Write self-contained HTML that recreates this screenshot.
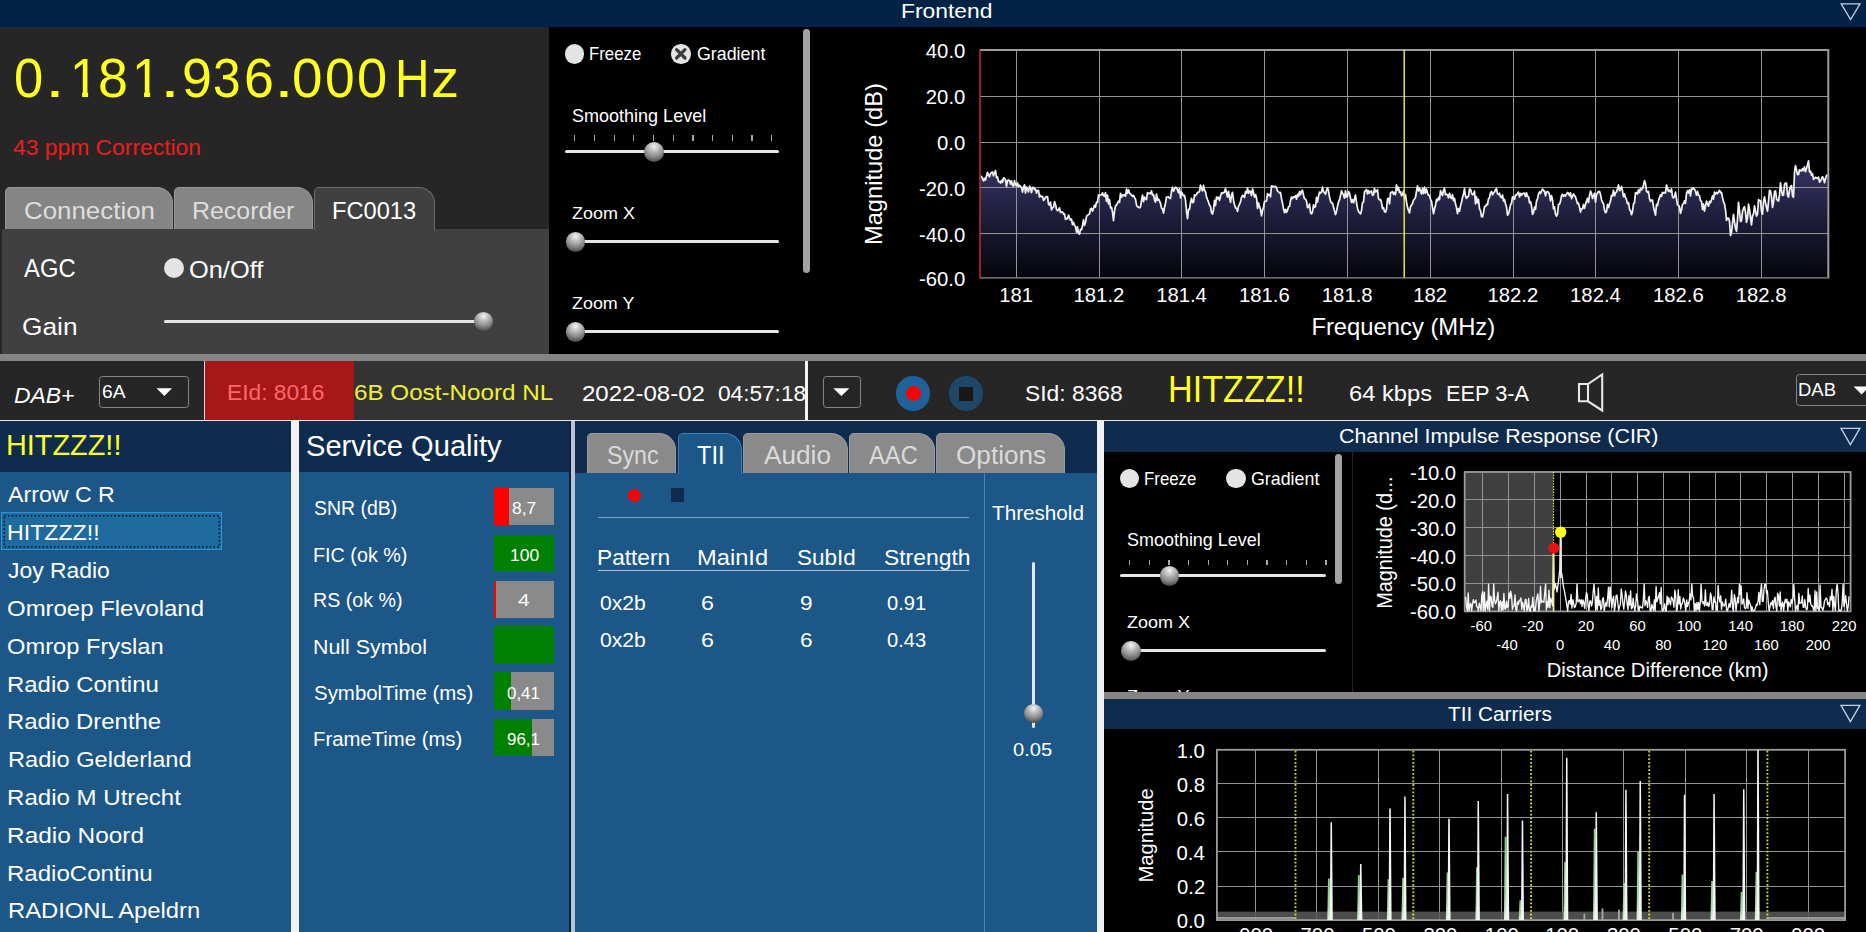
<!DOCTYPE html>
<html lang="en"><head><meta charset="utf-8"><title>DAB Frontend</title><style>
html,body{margin:0;padding:0;background:#000;}
body{width:1866px;height:932px;overflow:hidden;position:relative;font-family:"Liberation Sans",sans-serif;}
#r{position:absolute;left:0;top:0;width:1866px;height:932px;overflow:hidden;background:#000;}
#r div,#r span.t,#r svg{position:absolute;}
#r span.t{white-space:nowrap;line-height:1;transform-origin:0 0;display:block;}
.knob{border-radius:50%;background:radial-gradient(circle at 50% 22%,#f4f4f4 0%,#c8c8c8 22%,#8c8c8c 55%,#4a4a4a 85%,#333 100%);}
.radio{border-radius:50%;background:#e4e4e4;}
.fq{white-space:nowrap;line-height:1;height:60px;}
.fq span{display:inline-block;line-height:1;transform-origin:0 0;text-align:left;vertical-align:baseline;}
</style></head><body><div id="r">
<div style="left:0.0px;top:0.0px;width:1866.0px;height:27.0px;background:#032346;"></div>
<div style="left:0.0px;top:27.0px;width:549.0px;height:202.0px;background:#262626;"></div>
<div style="left:0.0px;top:229.0px;width:549.0px;height:125.5px;background:#404040;"></div>
<div style="left:0.0px;top:229.0px;width:2.0px;height:125.5px;background:#262626;"></div>
<div style="left:0.0px;top:354.0px;width:1866.0px;height:7.0px;background:#848484;"></div>
<div style="left:0.0px;top:361.0px;width:1866.0px;height:59.0px;background:#262626;"></div>
<div style="left:354.0px;top:361.0px;width:451.0px;height:59.0px;background:#333333;"></div>
<div style="left:205.0px;top:361.0px;width:149.3px;height:59.0px;background:#a81717;"></div>
<div style="left:204.0px;top:361.0px;width:1.0px;height:59.0px;background:#d8d8d8;"></div>
<div style="left:804.5px;top:361.0px;width:3.5px;height:59.0px;background:#f2f2f2;"></div>
<div style="left:0.0px;top:420.0px;width:1866.0px;height:1.0px;background:#e8e8e8;"></div>
<div style="left:0.0px;top:421.0px;width:291.5px;height:50.5px;background:#0f2c4e;"></div>
<div style="left:0.0px;top:471.5px;width:291.5px;height:460.5px;background:#1c5787;"></div>
<div style="left:291.1px;top:421.0px;width:8.0px;height:511.0px;background:#f2f0f0;"></div>
<div style="left:299.0px;top:421.0px;width:272.0px;height:50.5px;background:#0f2c4e;"></div>
<div style="left:299.0px;top:471.5px;width:272.0px;height:460.5px;background:#1c5787;"></div>
<div style="left:569.4px;top:421.0px;width:7.0px;height:511.0px;background:#08223e;"></div>
<div style="left:570.8px;top:421.0px;width:4.3px;height:511.0px;background:#b8c2d0;"></div>
<div style="left:575.2px;top:421.0px;width:521.8px;height:51.5px;background:#0f2c4e;"></div>
<div style="left:575.2px;top:472.5px;width:521.8px;height:459.5px;background:#1c5787;"></div>
<div style="left:1097.0px;top:421.0px;width:7.0px;height:511.0px;background:#f0f0f0;"></div>
<div style="left:1104.0px;top:421.0px;width:762.0px;height:31.0px;background:#0f2c4e;"></div>
<div style="left:1104.0px;top:691.5px;width:762.0px;height:7.5px;background:#858585;"></div>
<div style="left:1104.0px;top:699.0px;width:762.0px;height:30.0px;background:#0f2c4e;"></div>
<span class="t" style="left:900.57px;top:1.89px;font-size:19.86px;color:#fff;transform:scaleX(1.1507);">Frontend</span>
<svg style="left:1836px;top:0" width="30" height="27"><path d="M5.2,3.8 L24,3.8 L14.6,19.6 Z" fill="none" stroke="#c4d2e2" stroke-width="1.3"/></svg>
<div class="fq" style="left:14.30px;top:51.33px;font-size:55.6px;color:#ffff20;"><span style="width:31.06px;font-size:55.6px;transform:scaleX(0.9442);">0</span><span style="width:25.15px;font-size:55.6px;transform:scaleX(1.2874);">.</span><span style="width:27.77px;font-size:55.6px;transform:scaleX(0.9200);clip-path:polygon(0 0,60px 0,60px 73%,19.7px 73%,19.7px 100%,13.1px 100%,13.1px 73%,0 73%);">1</span><span style="width:34.23px;font-size:55.6px;transform:scaleX(0.9682);">8</span><span style="width:27.25px;font-size:55.6px;transform:scaleX(0.9200);clip-path:polygon(0 0,60px 0,60px 73%,19.7px 73%,19.7px 100%,13.1px 100%,13.1px 73%,0 73%);">1</span><span style="width:21.82px;font-size:55.6px;transform:scaleX(1.2874);">.</span><span style="width:31.44px;font-size:55.6px;transform:scaleX(0.9670);">9</span><span style="width:31.29px;font-size:55.6px;transform:scaleX(0.8898);">3</span><span style="width:29.65px;font-size:55.6px;transform:scaleX(0.9670);">6</span><span style="width:18.55px;font-size:55.6px;transform:scaleX(1.2874);">.</span><span style="width:32.36px;font-size:55.6px;transform:scaleX(0.9855);">0</span><span style="width:31.97px;font-size:55.6px;transform:scaleX(0.9592);">0</span><span style="width:38.35px;font-size:55.6px;transform:scaleX(0.9742);">0</span><span style="width:35.57px;font-size:54.2px;transform:scaleX(0.8797);">H</span><span style="width:40.00px;font-size:54.2px;transform:scaleX(1.0350);">z</span></div>
<span class="t" style="left:13.44px;top:137.90px;font-size:21.26px;color:#ee1c1c;transform:scaleX(1.0754);">43 ppm Correction</span>
<div style="left:5px;top:187px;width:165.5px;height:41px;background:#858585;border:1px solid #989898;border-bottom:none;border-radius:5px 16px 0 0;"></div>
<div style="left:173.5px;top:187px;width:137.0px;height:41px;background:#858585;border:1px solid #989898;border-bottom:none;border-radius:5px 16px 0 0;"></div>
<div style="left:314px;top:187px;width:119px;height:42px;background:#404040;border:1px solid #6c6c6c;border-bottom:none;border-radius:5px 16px 0 0;"></div>
<span class="t" style="left:23.71px;top:198.53px;font-size:24.48px;color:#dedede;transform:scaleX(1.0576);">Connection</span>
<span class="t" style="left:191.76px;top:198.53px;font-size:24.48px;color:#dedede;transform:scaleX(1.0176);">Recorder</span>
<span class="t" style="left:331.86px;top:198.53px;font-size:24.48px;color:#fff;transform:scaleX(0.9664);">FC0013</span>
<span class="t" style="left:23.75px;top:256.19px;font-size:25.17px;color:#fff;transform:scaleX(0.9464);">AGC</span>
<div class="radio" style="left:164.3px;top:257.5px;width:20px;height:20px"></div>
<span class="t" style="left:189.36px;top:259.42px;font-size:23.43px;color:#fff;transform:scaleX(1.0838);">On/Off</span>
<span class="t" style="left:22.43px;top:315.02px;font-size:24.20px;color:#fff;transform:scaleX(1.0876);">Gain</span>
<div style="left:164.3px;top:319.7px;width:328.0px;height:3.2px;background:#e6e6e6;border-radius:2px;"></div>
<div class="knob" style="left:474px;top:311.8px;width:19px;height:19px"></div>
<div class="radio" style="left:564.6px;top:44.2px;width:19.6px;height:19.6px"></div>
<div class="radio" style="left:671.2px;top:44.3px;width:19.6px;height:19.6px"></div>
<svg style="left:671.2px;top:44.3px" width="20" height="20"><path d="M5.6,5.6 L14,14 M14,5.6 L5.6,14" stroke="#3c3c3c" stroke-width="3.2" stroke-linecap="round"/></svg>
<span class="t" style="left:589.35px;top:46.46px;font-size:17.76px;color:#fff;transform:scaleX(0.9468);">Freeze</span>
<span class="t" style="left:696.91px;top:46.46px;font-size:17.76px;color:#fff;transform:scaleX(1.0039);">Gradient</span>
<span class="t" style="left:571.69px;top:108.46px;font-size:17.76px;color:#fff;transform:scaleX(1.0147);">Smoothing Level</span>
<div style="left:574.1px;top:135.0px;width:1.3px;height:5.8px;background:#a8a8a8;"></div>
<div style="left:593.8px;top:135.0px;width:1.3px;height:5.8px;background:#a8a8a8;"></div>
<div style="left:613.5px;top:135.0px;width:1.3px;height:5.8px;background:#a8a8a8;"></div>
<div style="left:633.2px;top:135.0px;width:1.3px;height:5.8px;background:#a8a8a8;"></div>
<div style="left:652.9px;top:135.0px;width:1.3px;height:5.8px;background:#a8a8a8;"></div>
<div style="left:672.6px;top:135.0px;width:1.3px;height:5.8px;background:#a8a8a8;"></div>
<div style="left:692.3px;top:135.0px;width:1.3px;height:5.8px;background:#a8a8a8;"></div>
<div style="left:712.0px;top:135.0px;width:1.3px;height:5.8px;background:#a8a8a8;"></div>
<div style="left:731.7px;top:135.0px;width:1.3px;height:5.8px;background:#a8a8a8;"></div>
<div style="left:751.4px;top:135.0px;width:1.3px;height:5.8px;background:#a8a8a8;"></div>
<div style="left:771.1px;top:135.0px;width:1.3px;height:5.8px;background:#a8a8a8;"></div>
<div style="left:565.2px;top:149.7px;width:213.4px;height:3.3px;background:#e6e6e6;border-radius:2px;"></div>
<div class="knob" style="left:643.6px;top:142.2px;width:20px;height:20px"></div>
<span class="t" style="left:571.96px;top:204.86px;font-size:17.06px;color:#fff;transform:scaleX(1.0532);">Zoom X</span>
<div style="left:575.0px;top:239.8px;width:203.6px;height:3.3px;background:#e6e6e6;border-radius:2px;"></div>
<div class="knob" style="left:565.7px;top:232.1px;width:19.8px;height:19.8px"></div>
<span class="t" style="left:571.96px;top:294.96px;font-size:17.06px;color:#fff;transform:scaleX(1.0508);">Zoom Y</span>
<div style="left:575.0px;top:329.7px;width:203.6px;height:3.3px;background:#e6e6e6;border-radius:2px;"></div>
<div class="knob" style="left:565.7px;top:322px;width:19.8px;height:19.8px"></div>
<div style="left:803.2px;top:28.5px;width:6.8px;height:244.5px;background:#a2a2a2;border-radius:3.4px;"></div>
<span class="t" style="left:14.31px;top:385.15px;font-size:21.68px;color:#fff;transform:scaleX(1.0569);font-style:italic;">DAB+</span>
<div style="left:99px;top:376.2px;width:87.6px;height:30.1px;border:1px solid #858585;border-radius:3.5px;background:#262626"></div>
<span class="t" style="left:101.54px;top:383.42px;font-size:18.88px;color:#fff;transform:scaleX(1.0185);">6A</span>
<svg style="left:150px;top:380px" width="30" height="24"><path d="M6.5,8.2 L22.1,8.2 L14.3,16.1 Z" fill="#fff"/></svg>
<span class="t" style="left:227.18px;top:382.31px;font-size:21.96px;color:#ff6868;transform:scaleX(1.0367);">EId: 8016</span>
<span class="t" style="left:353.79px;top:382.31px;font-size:21.96px;color:#f0f030;transform:scaleX(1.1026);">6B Oost-Noord NL</span>
<span class="t" style="left:581.50px;top:382.71px;font-size:21.96px;color:#fff;transform:scaleX(1.0952);">2022-08-02</span>
<span class="t" style="left:717.50px;top:382.71px;font-size:21.96px;color:#fff;transform:scaleX(1.0304);">04:57:18</span>
<div style="left:804.5px;top:361.0px;width:3.5px;height:59.0px;background:#f2f2f2;"></div>
<div style="left:823.3px;top:376.2px;width:35.5px;height:30.1px;border:1px solid #858585;border-radius:3.5px;background:#262626"></div>
<svg style="left:826px;top:380px" width="30" height="24"><path d="M7.3,8.2 L23.4,8.2 L15.35,16.1 Z" fill="#fff"/></svg>
<div style="left:896.2px;top:376.4px;width:34.2px;height:34.2px;border-radius:50%;background:#1f6299"></div>
<div style="left:906px;top:386.2px;width:14.6px;height:14.6px;border-radius:50%;background:#ff0000"></div>
<div style="left:948.8px;top:376.4px;width:34.2px;height:34.2px;border-radius:50%;background:#1f4768"></div>
<div style="left:958.8px;top:386.5px;width:14.0px;height:14.0px;background:#181818;"></div>
<span class="t" style="left:1025.37px;top:382.96px;font-size:22.38px;color:#fff;transform:scaleX(1.0205);">SId: 8368</span>
<span class="t" style="left:1167.66px;top:371.73px;font-size:36.23px;color:#ffff20;transform:scaleX(0.9438);">HITZZZ!!</span>
<span class="t" style="left:1348.51px;top:382.96px;font-size:22.38px;color:#fff;transform:scaleX(1.0597);">64 kbps</span>
<span class="t" style="left:1445.76px;top:382.96px;font-size:22.38px;color:#fff;transform:scaleX(0.9715);">EEP 3-A</span>
<svg style="left:1570px;top:368px" width="40" height="48"><path d="M9,16 H18 L32.2,6.5 V42.5 L18,33.3 H9 Z M18,16 V33.3" fill="none" stroke="#e6e6e6" stroke-width="2.1" stroke-linejoin="miter"/></svg>
<div style="left:1796.4px;top:374.4px;width:90px;height:30.1px;border:1px solid #858585;border-radius:3.5px;background:#262626"></div>
<span class="t" style="left:1798.12px;top:381.86px;font-size:17.76px;color:#fff;transform:scaleX(1.0412);">DAB</span>
<svg style="left:1846px;top:380px" width="20" height="24"><path d="M7.6,6.5 L23.6,6.5 L15.6,14.5 Z" fill="#fff"/></svg>
<span class="t" style="left:5.59px;top:431.24px;font-size:29.13px;color:#ffff20;transform:scaleX(0.9908);">HITZZZ!!</span>
<div style="left:1px;top:512.3px;width:219.1px;height:35.5px;background:#1f6a9f;border:1px solid #2f93d8"></div>
<svg style="left:0;top:510px" width="226" height="42"><rect x="4.2" y="5.8" width="215.2" height="31.2" fill="none" stroke="#08101c" stroke-width="1.5" stroke-dasharray="1.5 2.3"/></svg>
<span class="t" style="left:8.40px;top:484.80px;font-size:21.26px;color:#fff;transform:scaleX(1.0902);">Arrow C R</span>
<span class="t" style="left:7.15px;top:522.90px;font-size:21.26px;color:#fff;transform:scaleX(1.0896);">HITZZZ!!</span>
<span class="t" style="left:8.06px;top:560.80px;font-size:21.26px;color:#fff;transform:scaleX(1.0769);">Joy Radio</span>
<span class="t" style="left:7.32px;top:599.00px;font-size:21.26px;color:#fff;transform:scaleX(1.1269);">Omroep Flevoland</span>
<span class="t" style="left:7.33px;top:637.00px;font-size:21.26px;color:#fff;transform:scaleX(1.1145);">Omrop Fryslan</span>
<span class="t" style="left:7.48px;top:674.50px;font-size:21.26px;color:#fff;transform:scaleX(1.1270);">Radio Continu</span>
<span class="t" style="left:7.49px;top:712.10px;font-size:21.26px;color:#fff;transform:scaleX(1.1246);">Radio Drenthe</span>
<span class="t" style="left:7.51px;top:749.80px;font-size:21.26px;color:#fff;transform:scaleX(1.1102);">Radio Gelderland</span>
<span class="t" style="left:7.47px;top:787.90px;font-size:21.26px;color:#fff;transform:scaleX(1.1326);">Radio M Utrecht</span>
<span class="t" style="left:7.45px;top:825.90px;font-size:21.26px;color:#fff;transform:scaleX(1.1489);">Radio Noord</span>
<span class="t" style="left:7.48px;top:863.80px;font-size:21.26px;color:#fff;transform:scaleX(1.1317);">RadioContinu</span>
<span class="t" style="left:7.50px;top:901.30px;font-size:21.26px;color:#fff;transform:scaleX(1.1193);">RADIONL Apeldrn</span>
<span class="t" style="left:306.19px;top:430.80px;font-size:29.65px;color:#fff;transform:scaleX(0.9815);">Service Quality</span>
<span class="t" style="left:313.82px;top:499.31px;font-size:19.72px;color:#fff;transform:scaleX(0.9862);">SNR (dB)</span>
<span class="t" style="left:313.42px;top:545.61px;font-size:19.72px;color:#fff;transform:scaleX(1.0032);">FIC (ok %)</span>
<span class="t" style="left:313.33px;top:591.21px;font-size:19.72px;color:#fff;transform:scaleX(0.9970);">RS (ok %)</span>
<span class="t" style="left:313.19px;top:637.91px;font-size:19.72px;color:#fff;transform:scaleX(1.0836);">Null Symbol</span>
<span class="t" style="left:313.98px;top:683.71px;font-size:19.72px;color:#fff;transform:scaleX(1.0373);">SymbolTime (ms)</span>
<span class="t" style="left:313.27px;top:729.91px;font-size:19.72px;color:#fff;transform:scaleX(1.0304);">FrameTime (ms)</span>
<div style="left:494.0px;top:488.2px;width:59.9px;height:37.3px;background:#8a8a8a;"></div>
<div style="left:494.0px;top:488.2px;width:14.8px;height:37.3px;background:#ff0000;"></div>
<div style="left:494.0px;top:534.6px;width:59.9px;height:37.3px;background:#8a8a8a;"></div>
<div style="left:494.0px;top:534.6px;width:60.0px;height:37.3px;background:#008000;"></div>
<div style="left:494.0px;top:580.9px;width:59.9px;height:37.3px;background:#8a8a8a;"></div>
<div style="left:494.0px;top:580.9px;width:1.5px;height:37.3px;background:#ff0000;"></div>
<div style="left:494.0px;top:626.4px;width:59.9px;height:37.3px;background:#8a8a8a;"></div>
<div style="left:494.0px;top:626.4px;width:60.0px;height:37.3px;background:#008000;"></div>
<div style="left:494.0px;top:672.3px;width:59.9px;height:37.3px;background:#8a8a8a;"></div>
<div style="left:494.0px;top:672.3px;width:16.9px;height:37.3px;background:#008000;"></div>
<div style="left:494.0px;top:719.2px;width:59.9px;height:37.3px;background:#8a8a8a;"></div>
<div style="left:494.0px;top:719.2px;width:37.9px;height:37.3px;background:#008000;"></div>
<span class="t" style="left:511.82px;top:499.66px;font-size:17.06px;color:#fff;transform:scaleX(1.0183);">8,7</span>
<span class="t" style="left:509.59px;top:546.56px;font-size:17.06px;color:#fff;transform:scaleX(1.0251);">100</span>
<span class="t" style="left:518.18px;top:592.46px;font-size:17.06px;color:#fff;transform:scaleX(1.2302);">4</span>
<span class="t" style="left:507.12px;top:684.86px;font-size:17.06px;color:#fff;transform:scaleX(0.9894);">0,41</span>
<span class="t" style="left:507.04px;top:730.56px;font-size:17.06px;color:#fff;transform:scaleX(0.9920);">96,1</span>
<div style="left:587.2px;top:432.5px;width:87.0px;height:39.0px;background:#8a8a8a;border:1px solid #9a9a9a;border-bottom:none;border-radius:5px 17px 0 0;"></div>
<div style="left:677.7px;top:432.5px;width:62.299999999999955px;height:40.0px;background:#1c5787;border:1px solid #3f7fb4;border-bottom:none;border-radius:5px 17px 0 0;"></div>
<div style="left:743.4px;top:432.5px;width:102.60000000000002px;height:39.0px;background:#8a8a8a;border:1px solid #9a9a9a;border-bottom:none;border-radius:5px 17px 0 0;"></div>
<div style="left:849.3px;top:432.5px;width:83.60000000000002px;height:39.0px;background:#8a8a8a;border:1px solid #9a9a9a;border-bottom:none;border-radius:5px 17px 0 0;"></div>
<div style="left:936.4px;top:432.5px;width:126.60000000000002px;height:39.0px;background:#8a8a8a;border:1px solid #9a9a9a;border-bottom:none;border-radius:5px 17px 0 0;"></div>
<span class="t" style="left:606.75px;top:443.23px;font-size:24.90px;color:#dadada;transform:scaleX(0.9338);">Sync</span>
<span class="t" style="left:696.93px;top:443.23px;font-size:24.90px;color:#fff;transform:scaleX(0.9481);">TII</span>
<span class="t" style="left:763.50px;top:443.23px;font-size:24.90px;color:#dadada;transform:scaleX(1.0525);">Audio</span>
<span class="t" style="left:869.20px;top:443.23px;font-size:24.90px;color:#dadada;transform:scaleX(0.9525);">AAC</span>
<span class="t" style="left:955.52px;top:443.23px;font-size:24.90px;color:#dadada;transform:scaleX(1.0505);">Options</span>
<div style="left:627.9px;top:488.8px;width:13.2px;height:13.2px;border-radius:50%;background:#ff0000"></div>
<div style="left:671.1px;top:488.2px;width:13.1px;height:14.1px;background:#0f2c4e;"></div>
<div style="left:597.9px;top:517.0px;width:371.4px;height:1.0px;background:#7da6c6;"></div>
<div style="left:597.9px;top:570.3px;width:371.4px;height:1.2px;background:#a9c2d6;"></div>
<div style="left:984.2px;top:472.5px;width:1.0px;height:459.5px;background:#4a82b2;"></div>
<span class="t" style="left:596.58px;top:547.23px;font-size:21.82px;color:#fff;transform:scaleX(1.0402);">Pattern</span>
<span class="t" style="left:697.31px;top:547.23px;font-size:21.82px;color:#fff;transform:scaleX(1.0852);">MainId</span>
<span class="t" style="left:796.79px;top:547.23px;font-size:21.82px;color:#fff;transform:scaleX(1.0322);">SubId</span>
<span class="t" style="left:884.27px;top:547.23px;font-size:21.82px;color:#fff;transform:scaleX(1.0490);">Strength</span>
<span class="t" style="left:599.76px;top:593.63px;font-size:19.58px;color:#fff;transform:scaleX(1.0778);">0x2b</span>
<span class="t" style="left:700.84px;top:593.63px;font-size:19.58px;color:#fff;transform:scaleX(1.1862);">6</span>
<span class="t" style="left:799.88px;top:593.63px;font-size:19.58px;color:#fff;transform:scaleX(1.1532);">9</span>
<span class="t" style="left:886.69px;top:593.63px;font-size:19.58px;color:#fff;transform:scaleX(1.0297);">0.91</span>
<span class="t" style="left:599.76px;top:630.53px;font-size:19.58px;color:#fff;transform:scaleX(1.0778);">0x2b</span>
<span class="t" style="left:700.84px;top:630.53px;font-size:19.58px;color:#fff;transform:scaleX(1.1862);">6</span>
<span class="t" style="left:799.77px;top:630.53px;font-size:19.58px;color:#fff;transform:scaleX(1.1532);">6</span>
<span class="t" style="left:886.70px;top:630.53px;font-size:19.58px;color:#fff;transform:scaleX(1.0269);">0.43</span>
<span class="t" style="left:992.29px;top:501.54px;font-size:20.98px;color:#fff;transform:scaleX(0.9861);">Threshold</span>
<div style="left:1032.2px;top:561.5px;width:3.2px;height:166.3px;background:#e6e6e6;border-radius:2px;"></div>
<div class="knob" style="left:1024.1px;top:703.7px;width:19.4px;height:19.4px"></div>
<span class="t" style="left:1012.60px;top:742.15px;font-size:17.90px;color:#fff;transform:scaleX(1.1232);">0.05</span>
<span class="t" style="left:1338.93px;top:426.37px;font-size:20.00px;color:#fff;transform:scaleX(1.0681);">Channel Impulse Response (CIR)</span>
<svg style="left:1836px;top:421px" width="30" height="30"><path d="M5,7.4 L23.9,7.4 L14.4,23.6 Z" fill="none" stroke="#c4d2e2" stroke-width="1.3"/></svg>
<div class="radio" style="left:1119.9px;top:468.7px;width:19.6px;height:19.6px"></div>
<div class="radio" style="left:1226px;top:468.7px;width:19.6px;height:19.6px"></div>
<span class="t" style="left:1144.35px;top:471.46px;font-size:17.76px;color:#fff;transform:scaleX(0.9487);">Freeze</span>
<span class="t" style="left:1251.41px;top:471.46px;font-size:17.76px;color:#fff;transform:scaleX(1.0039);">Gradient</span>
<span class="t" style="left:1127.09px;top:532.46px;font-size:17.76px;color:#fff;transform:scaleX(1.0116);">Smoothing Level</span>
<div style="left:1129.1px;top:559.6px;width:1.3px;height:5.4px;background:#a8a8a8;"></div>
<div style="left:1148.7px;top:559.6px;width:1.3px;height:5.4px;background:#a8a8a8;"></div>
<div style="left:1168.3px;top:559.6px;width:1.3px;height:5.4px;background:#a8a8a8;"></div>
<div style="left:1188.0px;top:559.6px;width:1.3px;height:5.4px;background:#a8a8a8;"></div>
<div style="left:1207.6px;top:559.6px;width:1.3px;height:5.4px;background:#a8a8a8;"></div>
<div style="left:1227.2px;top:559.6px;width:1.3px;height:5.4px;background:#a8a8a8;"></div>
<div style="left:1246.8px;top:559.6px;width:1.3px;height:5.4px;background:#a8a8a8;"></div>
<div style="left:1266.4px;top:559.6px;width:1.3px;height:5.4px;background:#a8a8a8;"></div>
<div style="left:1286.1px;top:559.6px;width:1.3px;height:5.4px;background:#a8a8a8;"></div>
<div style="left:1305.7px;top:559.6px;width:1.3px;height:5.4px;background:#a8a8a8;"></div>
<div style="left:1325.3px;top:559.6px;width:1.3px;height:5.4px;background:#a8a8a8;"></div>
<div style="left:1120.3px;top:573.9px;width:205.6px;height:3.3px;background:#e6e6e6;border-radius:2px;"></div>
<div class="knob" style="left:1159.6px;top:566.2px;width:19.8px;height:19.8px"></div>
<span class="t" style="left:1126.76px;top:613.96px;font-size:17.06px;color:#fff;transform:scaleX(1.0549);">Zoom X</span>
<div style="left:1130.0px;top:648.9px;width:195.9px;height:3.3px;background:#e6e6e6;border-radius:2px;"></div>
<div class="knob" style="left:1120.8px;top:641.1px;width:19.8px;height:19.8px"></div>
<div style="left:1335.3px;top:453.5px;width:7.2px;height:130.0px;background:#a2a2a2;border-radius:3.6px;"></div>
<div style="left:1110px;top:680px;width:240px;height:11.5px;overflow:hidden">
<span class="t" style="left:16.76px;top:7.66px;font-size:17.06px;color:#fff;transform:scaleX(1.0542);">Zoom Y</span>
</div>
<div style="left:1352.2px;top:452.0px;width:1.0px;height:239.5px;background:#242424;"></div>
<span class="t" style="left:1447.88px;top:703.50px;font-size:20.56px;color:#fff;transform:scaleX(1.0102);">TII Carriers</span>
<svg style="left:1836px;top:699px" width="30" height="30"><path d="M5,6.4 L23.9,6.4 L14.4,22.6 Z" fill="none" stroke="#c4d2e2" stroke-width="1.3"/></svg>
<span class="t" style="left:925.83px;top:41.02px;font-size:20.30px;color:#fff;">40.0</span>
<span class="t" style="left:925.83px;top:87.22px;font-size:20.30px;color:#fff;">20.0</span>
<span class="t" style="left:937.09px;top:133.22px;font-size:20.30px;color:#fff;">0.0</span>
<span class="t" style="left:919.03px;top:178.72px;font-size:20.30px;color:#fff;">-20.0</span>
<span class="t" style="left:919.03px;top:224.52px;font-size:20.30px;color:#fff;">-40.0</span>
<span class="t" style="left:919.03px;top:268.82px;font-size:20.30px;color:#fff;">-60.0</span>
<span class="t" style="left:999.20px;top:285.02px;font-size:20.30px;color:#fff;">181</span>
<span class="t" style="left:1073.56px;top:285.02px;font-size:20.30px;color:#fff;">181.2</span>
<span class="t" style="left:1156.15px;top:285.02px;font-size:20.30px;color:#fff;">181.4</span>
<span class="t" style="left:1239.04px;top:285.02px;font-size:20.30px;color:#fff;">181.6</span>
<span class="t" style="left:1321.83px;top:285.02px;font-size:20.30px;color:#fff;">181.8</span>
<span class="t" style="left:1413.20px;top:285.02px;font-size:20.30px;color:#fff;">182</span>
<span class="t" style="left:1487.51px;top:285.02px;font-size:20.30px;color:#fff;">182.2</span>
<span class="t" style="left:1570.10px;top:285.02px;font-size:20.30px;color:#fff;">182.4</span>
<span class="t" style="left:1652.99px;top:285.02px;font-size:20.30px;color:#fff;">182.6</span>
<span class="t" style="left:1735.78px;top:285.02px;font-size:20.30px;color:#fff;">182.8</span>
<span class="t" style="left:1311.39px;top:314.55px;font-size:23.80px;color:#fff;">Frequency (MHz)</span>
<span class="t" style="left:794.37px;top:152.15px;width:162.46px;height:23.70px;font-size:23.70px;color:#fff;transform-origin:50% 50%;transform:rotate(-90deg) scaleX(1.0000);">Magnitude (dB)</span>
<span class="t" style="left:1409.93px;top:462.92px;font-size:20.30px;color:#fff;">-10.0</span>
<span class="t" style="left:1409.93px;top:490.80px;font-size:20.30px;color:#fff;">-20.0</span>
<span class="t" style="left:1409.93px;top:518.68px;font-size:20.30px;color:#fff;">-30.0</span>
<span class="t" style="left:1409.93px;top:546.56px;font-size:20.30px;color:#fff;">-40.0</span>
<span class="t" style="left:1409.93px;top:574.44px;font-size:20.30px;color:#fff;">-50.0</span>
<span class="t" style="left:1409.93px;top:602.32px;font-size:20.30px;color:#fff;">-60.0</span>
<span class="t" style="left:1470.50px;top:618.67px;font-size:14.80px;color:#fff;">-60</span>
<span class="t" style="left:1522.12px;top:618.67px;font-size:14.80px;color:#fff;">-20</span>
<span class="t" style="left:1577.68px;top:618.67px;font-size:14.80px;color:#fff;">20</span>
<span class="t" style="left:1629.31px;top:618.67px;font-size:14.80px;color:#fff;">60</span>
<span class="t" style="left:1676.63px;top:618.67px;font-size:14.80px;color:#fff;">100</span>
<span class="t" style="left:1728.25px;top:618.67px;font-size:14.80px;color:#fff;">140</span>
<span class="t" style="left:1779.87px;top:618.67px;font-size:14.80px;color:#fff;">180</span>
<span class="t" style="left:1831.68px;top:618.67px;font-size:14.80px;color:#fff;">220</span>
<span class="t" style="left:1496.31px;top:638.27px;font-size:14.80px;color:#fff;">-40</span>
<span class="t" style="left:1556.06px;top:638.27px;font-size:14.80px;color:#fff;">0</span>
<span class="t" style="left:1603.72px;top:638.27px;font-size:14.80px;color:#fff;">40</span>
<span class="t" style="left:1655.15px;top:638.27px;font-size:14.80px;color:#fff;">80</span>
<span class="t" style="left:1702.44px;top:638.27px;font-size:14.80px;color:#fff;">120</span>
<span class="t" style="left:1754.06px;top:638.27px;font-size:14.80px;color:#fff;">160</span>
<span class="t" style="left:1805.87px;top:638.27px;font-size:14.80px;color:#fff;">200</span>
<span class="t" style="left:1546.70px;top:659.90px;font-size:20.20px;color:#fff;">Distance Difference (km)</span>
<span class="t" style="left:1314.40px;top:531.75px;width:143.19px;height:21.50px;font-size:21.50px;color:#fff;transform-origin:50% 50%;transform:rotate(-90deg) scaleX(0.9231);">Magnitude (d...</span>
<span class="t" style="left:1176.69px;top:740.72px;font-size:20.30px;color:#fff;">1.0</span>
<span class="t" style="left:1176.80px;top:774.78px;font-size:20.30px;color:#fff;">0.8</span>
<span class="t" style="left:1176.80px;top:808.84px;font-size:20.30px;color:#fff;">0.6</span>
<span class="t" style="left:1176.59px;top:842.90px;font-size:20.30px;color:#fff;">0.4</span>
<span class="t" style="left:1177.00px;top:876.96px;font-size:20.30px;color:#fff;">0.2</span>
<span class="t" style="left:1176.69px;top:911.02px;font-size:20.30px;color:#fff;">0.0</span>
<span class="t" style="left:1232.40px;top:924.72px;font-size:20.30px;color:#fff;">-900</span>
<span class="t" style="left:1293.83px;top:924.72px;font-size:20.30px;color:#fff;">-700</span>
<span class="t" style="left:1355.26px;top:924.72px;font-size:20.30px;color:#fff;">-500</span>
<span class="t" style="left:1416.69px;top:924.72px;font-size:20.30px;color:#fff;">-300</span>
<span class="t" style="left:1478.12px;top:924.72px;font-size:20.30px;color:#fff;">-100</span>
<span class="t" style="left:1545.14px;top:924.72px;font-size:20.30px;color:#fff;">100</span>
<span class="t" style="left:1606.93px;top:924.72px;font-size:20.30px;color:#fff;">300</span>
<span class="t" style="left:1668.36px;top:924.72px;font-size:20.30px;color:#fff;">500</span>
<span class="t" style="left:1729.69px;top:924.72px;font-size:20.30px;color:#fff;">700</span>
<span class="t" style="left:1791.17px;top:924.72px;font-size:20.30px;color:#fff;">900</span>
<span class="t" style="left:1099.48px;top:825.30px;width:95.04px;height:20.20px;font-size:20.20px;color:#fff;transform-origin:50% 50%;transform:rotate(-90deg) scaleX(1.0000);">Magnitude</span>
<svg style="left:0;top:0" width="1866" height="932" viewBox="0 0 1866 932"><defs><linearGradient id="sg" gradientUnits="userSpaceOnUse" x1="0" y1="165" x2="0" y2="278"><stop offset="0" stop-color="#343464"/><stop offset="0.6" stop-color="#17172e"/><stop offset="1" stop-color="#05050c"/></linearGradient></defs><polygon points="980.0,277.8 980.5,176.1 981.5,176.6 982.5,178.5 983.5,180.8 984.5,178.4 985.5,180.0 986.5,175.9 987.5,172.3 988.5,175.2 989.5,176.8 990.5,173.5 991.5,172.7 992.5,171.9 993.5,175.8 994.5,173.0 995.5,170.6 996.5,177.6 997.5,176.9 998.5,181.7 999.5,181.4 1000.5,183.1 1001.5,180.3 1002.5,182.3 1003.5,177.9 1004.5,178.3 1005.5,180.2 1006.5,186.4 1007.5,180.6 1008.5,180.1 1009.5,180.5 1010.5,184.0 1011.5,180.9 1012.5,185.6 1013.5,186.0 1014.5,180.6 1015.5,185.2 1016.5,185.8 1017.5,182.9 1018.5,186.4 1019.5,185.3 1020.5,186.4 1021.5,187.3 1022.5,192.1 1023.5,187.2 1024.5,184.8 1025.5,193.1 1026.5,187.0 1027.5,189.4 1028.5,191.8 1029.5,186.1 1030.5,188.1 1031.5,192.7 1032.5,187.6 1033.5,187.3 1034.5,189.6 1035.5,188.9 1036.5,193.1 1037.5,190.6 1038.5,190.4 1039.5,197.0 1040.5,195.5 1041.5,196.7 1042.5,196.3 1043.5,200.3 1044.5,199.3 1045.5,197.3 1046.5,196.7 1047.5,196.6 1048.5,204.1 1049.5,205.2 1050.5,202.2 1051.5,209.8 1052.5,207.7 1053.5,207.2 1054.5,201.6 1055.5,204.5 1056.5,209.2 1057.5,210.7 1058.5,210.0 1059.5,207.9 1060.5,212.5 1061.5,212.1 1062.5,211.9 1063.5,214.0 1064.5,213.9 1065.5,219.4 1066.5,218.4 1067.5,218.8 1068.5,215.1 1069.5,217.8 1070.5,220.1 1071.5,219.1 1072.5,224.6 1073.5,222.4 1074.5,225.2 1075.5,226.5 1076.5,232.1 1077.5,226.9 1078.5,233.3 1079.5,234.1 1080.5,229.4 1081.5,229.8 1082.5,225.8 1083.5,219.6 1084.5,225.3 1085.5,222.5 1086.5,216.4 1087.5,215.2 1088.5,214.6 1089.5,214.0 1090.5,208.9 1091.5,208.4 1092.5,211.2 1093.5,208.3 1094.5,205.2 1095.5,207.2 1096.5,202.1 1097.5,202.4 1098.5,195.0 1099.5,195.5 1100.5,195.0 1101.5,194.9 1102.5,192.8 1103.5,195.8 1104.5,196.3 1105.5,192.6 1106.5,201.3 1107.5,195.2 1108.5,203.9 1109.5,199.7 1110.5,208.0 1111.5,207.2 1112.5,212.0 1113.5,220.7 1114.5,211.3 1115.5,205.9 1116.5,205.0 1117.5,203.1 1118.5,201.1 1119.5,202.3 1120.5,193.3 1121.5,197.4 1122.5,195.0 1123.5,195.6 1124.5,194.6 1125.5,196.3 1126.5,189.0 1127.5,193.3 1128.5,189.8 1129.5,193.0 1130.5,194.1 1131.5,195.0 1132.5,196.4 1133.5,195.3 1134.5,197.7 1135.5,199.2 1136.5,204.9 1137.5,206.8 1138.5,206.9 1139.5,207.8 1140.5,206.8 1141.5,200.7 1142.5,195.1 1143.5,201.6 1144.5,197.2 1145.5,198.8 1146.5,199.6 1147.5,192.6 1148.5,193.5 1149.5,193.1 1150.5,193.7 1151.5,190.9 1152.5,195.1 1153.5,194.5 1154.5,199.9 1155.5,202.0 1156.5,194.2 1157.5,200.3 1158.5,199.0 1159.5,200.9 1160.5,203.3 1161.5,208.1 1162.5,209.0 1163.5,213.1 1164.5,207.4 1165.5,203.2 1166.5,197.0 1167.5,197.0 1168.5,196.9 1169.5,198.2 1170.5,198.5 1171.5,191.0 1172.5,187.1 1173.5,191.4 1174.5,188.8 1175.5,187.2 1176.5,187.7 1177.5,189.9 1178.5,192.8 1179.5,188.4 1180.5,197.9 1181.5,192.0 1182.5,193.9 1183.5,195.9 1184.5,195.4 1185.5,200.1 1186.5,211.2 1187.5,218.7 1188.5,209.4 1189.5,209.4 1190.5,202.5 1191.5,198.3 1192.5,202.5 1193.5,202.3 1194.5,194.9 1195.5,195.8 1196.5,194.5 1197.5,192.4 1198.5,192.4 1199.5,191.4 1200.5,185.1 1201.5,188.8 1202.5,190.8 1203.5,185.4 1204.5,190.2 1205.5,192.0 1206.5,196.7 1207.5,199.5 1208.5,202.1 1209.5,205.2 1210.5,206.4 1211.5,212.7 1212.5,214.0 1213.5,209.7 1214.5,200.3 1215.5,205.5 1216.5,197.0 1217.5,198.9 1218.5,197.2 1219.5,200.3 1220.5,196.1 1221.5,192.9 1222.5,193.4 1223.5,192.6 1224.5,192.1 1225.5,188.6 1226.5,192.6 1227.5,197.0 1228.5,191.4 1229.5,197.2 1230.5,202.3 1231.5,195.0 1232.5,192.4 1233.5,200.2 1234.5,204.8 1235.5,208.0 1236.5,208.2 1237.5,211.3 1238.5,206.4 1239.5,204.4 1240.5,201.7 1241.5,197.5 1242.5,195.4 1243.5,195.9 1244.5,197.5 1245.5,191.7 1246.5,193.1 1247.5,188.0 1248.5,193.3 1249.5,191.0 1250.5,191.8 1251.5,195.5 1252.5,189.0 1253.5,192.3 1254.5,197.2 1255.5,194.6 1256.5,197.7 1257.5,208.4 1258.5,202.8 1259.5,206.6 1260.5,209.5 1261.5,215.9 1262.5,210.5 1263.5,207.4 1264.5,201.3 1265.5,201.5 1266.5,200.9 1267.5,193.7 1268.5,195.5 1269.5,194.4 1270.5,196.8 1271.5,186.0 1272.5,186.2 1273.5,186.5 1274.5,186.5 1275.5,186.4 1276.5,187.7 1277.5,190.9 1278.5,191.8 1279.5,193.0 1280.5,192.4 1281.5,198.7 1282.5,203.1 1283.5,208.7 1284.5,212.6 1285.5,209.4 1286.5,212.4 1287.5,210.2 1288.5,206.7 1289.5,206.3 1290.5,200.8 1291.5,197.1 1292.5,198.5 1293.5,196.7 1294.5,197.2 1295.5,195.7 1296.5,199.2 1297.5,194.3 1298.5,196.3 1299.5,191.6 1300.5,194.7 1301.5,191.2 1302.5,190.3 1303.5,195.2 1304.5,198.8 1305.5,199.0 1306.5,201.2 1307.5,207.6 1308.5,207.3 1309.5,204.0 1310.5,212.7 1311.5,213.8 1312.5,211.8 1313.5,204.9 1314.5,207.3 1315.5,206.5 1316.5,197.4 1317.5,202.0 1318.5,196.1 1319.5,192.2 1320.5,193.2 1321.5,191.9 1322.5,187.2 1323.5,191.6 1324.5,192.6 1325.5,194.3 1326.5,190.4 1327.5,187.9 1328.5,190.8 1329.5,197.1 1330.5,201.1 1331.5,203.0 1332.5,203.2 1333.5,207.1 1334.5,210.9 1335.5,214.6 1336.5,211.4 1337.5,206.2 1338.5,202.0 1339.5,199.9 1340.5,195.8 1341.5,190.7 1342.5,193.3 1343.5,194.5 1344.5,198.2 1345.5,190.8 1346.5,197.0 1347.5,196.4 1348.5,191.5 1349.5,193.2 1350.5,198.0 1351.5,202.4 1352.5,199.7 1353.5,202.7 1354.5,198.7 1355.5,195.0 1356.5,203.0 1357.5,208.2 1358.5,211.6 1359.5,212.5 1360.5,213.9 1361.5,210.5 1362.5,202.7 1363.5,202.0 1364.5,192.0 1365.5,190.6 1366.5,189.5 1367.5,193.9 1368.5,190.7 1369.5,193.1 1370.5,191.6 1371.5,190.9 1372.5,195.4 1373.5,194.8 1374.5,188.5 1375.5,191.9 1376.5,191.2 1377.5,189.6 1378.5,198.7 1379.5,199.8 1380.5,199.6 1381.5,202.8 1382.5,208.6 1383.5,207.6 1384.5,211.5 1385.5,212.2 1386.5,209.3 1387.5,199.0 1388.5,198.3 1389.5,203.8 1390.5,193.0 1391.5,192.2 1392.5,191.5 1393.5,194.3 1394.5,192.4 1395.5,194.6 1396.5,184.8 1397.5,190.1 1398.5,187.4 1399.5,192.5 1400.5,191.6 1401.5,195.7 1402.5,194.6 1403.5,191.0 1404.5,198.5 1405.5,194.5 1406.5,201.9 1407.5,207.3 1408.5,210.5 1409.5,212.9 1410.5,206.6 1411.5,205.0 1412.5,203.5 1413.5,200.3 1414.5,199.0 1415.5,197.4 1416.5,191.2 1417.5,186.0 1418.5,191.0 1419.5,188.2 1420.5,190.9 1421.5,193.9 1422.5,188.6 1423.5,193.7 1424.5,187.2 1425.5,193.1 1426.5,189.2 1427.5,192.7 1428.5,195.4 1429.5,195.3 1430.5,199.4 1431.5,201.1 1432.5,207.3 1433.5,213.7 1434.5,208.9 1435.5,205.2 1436.5,199.3 1437.5,201.1 1438.5,197.5 1439.5,199.5 1440.5,190.6 1441.5,193.7 1442.5,195.5 1443.5,190.2 1444.5,188.3 1445.5,194.8 1446.5,194.2 1447.5,194.9 1448.5,197.9 1449.5,193.3 1450.5,197.3 1451.5,198.5 1452.5,194.7 1453.5,200.6 1454.5,198.3 1455.5,204.1 1456.5,207.5 1457.5,213.6 1458.5,208.6 1459.5,211.3 1460.5,205.7 1461.5,202.2 1462.5,197.6 1463.5,194.0 1464.5,188.7 1465.5,196.2 1466.5,198.3 1467.5,196.5 1468.5,196.5 1469.5,189.1 1470.5,189.3 1471.5,192.8 1472.5,194.8 1473.5,194.3 1474.5,191.2 1475.5,203.9 1476.5,196.9 1477.5,202.9 1478.5,199.4 1479.5,208.9 1480.5,210.4 1481.5,216.5 1482.5,216.9 1483.5,212.9 1484.5,206.7 1485.5,206.5 1486.5,204.4 1487.5,204.7 1488.5,198.8 1489.5,197.7 1490.5,192.7 1491.5,191.5 1492.5,194.8 1493.5,193.0 1494.5,191.9 1495.5,189.6 1496.5,188.8 1497.5,193.9 1498.5,194.6 1499.5,193.2 1500.5,197.1 1501.5,197.7 1502.5,195.0 1503.5,201.1 1504.5,199.5 1505.5,203.7 1506.5,207.0 1507.5,215.1 1508.5,214.0 1509.5,209.8 1510.5,204.7 1511.5,203.4 1512.5,196.9 1513.5,197.1 1514.5,199.3 1515.5,195.0 1516.5,195.1 1517.5,193.4 1518.5,192.1 1519.5,196.9 1520.5,193.3 1521.5,195.2 1522.5,193.8 1523.5,193.1 1524.5,193.4 1525.5,196.6 1526.5,192.8 1527.5,196.4 1528.5,196.5 1529.5,202.8 1530.5,201.7 1531.5,206.1 1532.5,214.4 1533.5,212.7 1534.5,207.2 1535.5,209.3 1536.5,201.2 1537.5,198.8 1538.5,193.9 1539.5,191.9 1540.5,193.5 1541.5,191.1 1542.5,189.1 1543.5,190.6 1544.5,191.1 1545.5,195.9 1546.5,192.0 1547.5,191.4 1548.5,192.1 1549.5,194.7 1550.5,200.8 1551.5,195.6 1552.5,199.5 1553.5,208.8 1554.5,206.8 1555.5,213.8 1556.5,216.1 1557.5,214.0 1558.5,204.4 1559.5,204.2 1560.5,201.2 1561.5,195.8 1562.5,194.2 1563.5,196.4 1564.5,194.9 1565.5,196.0 1566.5,194.1 1567.5,192.5 1568.5,193.3 1569.5,195.6 1570.5,192.9 1571.5,198.6 1572.5,196.3 1573.5,194.0 1574.5,195.4 1575.5,196.9 1576.5,200.2 1577.5,203.7 1578.5,203.1 1579.5,207.3 1580.5,212.1 1581.5,208.8 1582.5,208.8 1583.5,204.5 1584.5,208.3 1585.5,204.4 1586.5,201.4 1587.5,198.3 1588.5,202.5 1589.5,195.5 1590.5,191.1 1591.5,193.1 1592.5,198.5 1593.5,196.3 1594.5,193.3 1595.5,202.2 1596.5,194.9 1597.5,192.9 1598.5,191.6 1599.5,191.3 1600.5,194.4 1601.5,199.7 1602.5,202.4 1603.5,203.7 1604.5,210.1 1605.5,212.7 1606.5,211.9 1607.5,204.4 1608.5,207.5 1609.5,203.7 1610.5,201.1 1611.5,195.4 1612.5,195.9 1613.5,190.4 1614.5,195.9 1615.5,192.8 1616.5,192.1 1617.5,188.4 1618.5,184.9 1619.5,190.7 1620.5,189.2 1621.5,186.5 1622.5,190.9 1623.5,196.7 1624.5,193.9 1625.5,197.7 1626.5,199.7 1627.5,203.8 1628.5,202.6 1629.5,209.2 1630.5,210.8 1631.5,214.7 1632.5,211.5 1633.5,203.9 1634.5,202.4 1635.5,192.9 1636.5,192.5 1637.5,194.1 1638.5,189.9 1639.5,192.5 1640.5,188.3 1641.5,189.9 1642.5,188.7 1643.5,184.9 1644.5,180.7 1645.5,183.5 1646.5,191.1 1647.5,192.4 1648.5,191.5 1649.5,198.6 1650.5,201.5 1651.5,200.1 1652.5,200.1 1653.5,206.9 1654.5,211.3 1655.5,215.1 1656.5,204.4 1657.5,205.5 1658.5,200.6 1659.5,197.6 1660.5,194.9 1661.5,196.4 1662.5,192.3 1663.5,193.0 1664.5,192.7 1665.5,192.9 1666.5,185.0 1667.5,188.4 1668.5,191.4 1669.5,190.2 1670.5,191.9 1671.5,189.0 1672.5,196.9 1673.5,198.0 1674.5,196.7 1675.5,192.1 1676.5,198.6 1677.5,205.0 1678.5,205.1 1679.5,207.0 1680.5,213.3 1681.5,210.1 1682.5,204.2 1683.5,203.8 1684.5,200.9 1685.5,203.3 1686.5,193.3 1687.5,190.7 1688.5,193.0 1689.5,189.8 1690.5,195.8 1691.5,188.6 1692.5,189.4 1693.5,188.0 1694.5,189.0 1695.5,191.5 1696.5,195.2 1697.5,191.4 1698.5,195.2 1699.5,195.8 1700.5,200.8 1701.5,201.3 1702.5,209.5 1703.5,204.0 1704.5,211.2 1705.5,205.9 1706.5,201.1 1707.5,204.2 1708.5,206.2 1709.5,201.4 1710.5,202.7 1711.5,199.8 1712.5,195.9 1713.5,199.1 1714.5,192.2 1715.5,194.1 1716.5,192.5 1717.5,193.7 1718.5,191.8 1719.5,190.3 1720.5,192.8 1721.5,192.3 1722.5,197.6 1723.5,201.7 1724.5,203.8 1725.5,209.8 1726.5,220.4 1727.5,218.1 1728.5,218.1 1729.5,221.1 1730.5,235.5 1731.5,233.0 1732.5,222.4 1733.5,214.3 1734.5,221.8 1735.5,228.3 1736.5,231.3 1737.5,219.3 1738.5,202.4 1739.5,210.5 1740.5,221.5 1741.5,220.6 1742.5,211.5 1743.5,208.3 1744.5,206.6 1745.5,212.2 1746.5,222.3 1747.5,217.9 1748.5,204.2 1749.5,209.4 1750.5,217.4 1751.5,225.0 1752.5,215.8 1753.5,214.2 1754.5,205.9 1755.5,211.1 1756.5,216.1 1757.5,214.2 1758.5,199.6 1759.5,200.7 1760.5,200.6 1761.5,211.5 1762.5,214.2 1763.5,201.7 1764.5,196.9 1765.5,202.7 1766.5,207.4 1767.5,211.2 1768.5,201.8 1769.5,190.3 1770.5,191.1 1771.5,196.5 1772.5,207.3 1773.5,202.3 1774.5,191.5 1775.5,190.9 1776.5,198.7 1777.5,200.4 1778.5,201.1 1779.5,194.9 1780.5,182.9 1781.5,190.1 1782.5,195.3 1783.5,195.2 1784.5,184.5 1785.5,183.1 1786.5,183.2 1787.5,195.4 1788.5,197.2 1789.5,190.3 1790.5,186.4 1791.5,185.6 1792.5,195.9 1793.5,197.2 1794.5,172.3 1795.5,165.7 1796.5,169.8 1797.5,174.7 1798.5,174.5 1799.5,169.8 1800.5,170.2 1801.5,171.0 1802.5,168.7 1803.5,170.6 1804.5,166.8 1805.5,171.7 1806.5,168.6 1807.5,164.7 1808.5,160.9 1809.5,172.0 1810.5,171.1 1811.5,175.2 1812.5,173.7 1813.5,179.4 1814.5,178.6 1815.5,177.2 1816.5,178.0 1817.5,178.3 1818.5,177.2 1819.5,182.1 1820.5,181.0 1821.5,178.9 1822.5,176.7 1823.5,178.7 1824.5,182.6 1825.5,178.7 1826.5,175.4 1827.5,175.8 1827.3,277.8" fill="url(#sg)" transform="translate(0,0)"/><line x1="980.0" x2="1828.3" y1="96.5" y2="96.5" stroke="#949494" stroke-width="1"/><line x1="980.0" x2="1828.3" y1="142.5" y2="142.5" stroke="#949494" stroke-width="1"/><line x1="980.0" x2="1828.3" y1="187.5" y2="187.5" stroke="#949494" stroke-width="1"/><line x1="980.0" x2="1828.3" y1="233.5" y2="233.5" stroke="#949494" stroke-width="1"/><line x1="1016.5" x2="1016.5" y1="50.0" y2="277.8" stroke="#949494" stroke-width="1"/><line x1="1099.5" x2="1099.5" y1="50.0" y2="277.8" stroke="#949494" stroke-width="1"/><line x1="1181.5" x2="1181.5" y1="50.0" y2="277.8" stroke="#949494" stroke-width="1"/><line x1="1264.5" x2="1264.5" y1="50.0" y2="277.8" stroke="#949494" stroke-width="1"/><line x1="1347.5" x2="1347.5" y1="50.0" y2="277.8" stroke="#949494" stroke-width="1"/><line x1="1430.5" x2="1430.5" y1="50.0" y2="277.8" stroke="#949494" stroke-width="1"/><line x1="1513.5" x2="1513.5" y1="50.0" y2="277.8" stroke="#949494" stroke-width="1"/><line x1="1595.5" x2="1595.5" y1="50.0" y2="277.8" stroke="#949494" stroke-width="1"/><line x1="1678.5" x2="1678.5" y1="50.0" y2="277.8" stroke="#949494" stroke-width="1"/><line x1="1761.5" x2="1761.5" y1="50.0" y2="277.8" stroke="#949494" stroke-width="1"/><path d="M980.0,50.0 H1828.3 V277.8" fill="none" stroke="#9c9c9c" stroke-width="2"/><line x1="980.0" x2="1829.3" y1="277.8" y2="277.8" stroke="#8e8e8e" stroke-width="1.2"/><polyline points="980.5,176.1 981.5,176.6 982.5,178.5 983.5,180.8 984.5,178.4 985.5,180.0 986.5,175.9 987.5,172.3 988.5,175.2 989.5,176.8 990.5,173.5 991.5,172.7 992.5,171.9 993.5,175.8 994.5,173.0 995.5,170.6 996.5,177.6 997.5,176.9 998.5,181.7 999.5,181.4 1000.5,183.1 1001.5,180.3 1002.5,182.3 1003.5,177.9 1004.5,178.3 1005.5,180.2 1006.5,186.4 1007.5,180.6 1008.5,180.1 1009.5,180.5 1010.5,184.0 1011.5,180.9 1012.5,185.6 1013.5,186.0 1014.5,180.6 1015.5,185.2 1016.5,185.8 1017.5,182.9 1018.5,186.4 1019.5,185.3 1020.5,186.4 1021.5,187.3 1022.5,192.1 1023.5,187.2 1024.5,184.8 1025.5,193.1 1026.5,187.0 1027.5,189.4 1028.5,191.8 1029.5,186.1 1030.5,188.1 1031.5,192.7 1032.5,187.6 1033.5,187.3 1034.5,189.6 1035.5,188.9 1036.5,193.1 1037.5,190.6 1038.5,190.4 1039.5,197.0 1040.5,195.5 1041.5,196.7 1042.5,196.3 1043.5,200.3 1044.5,199.3 1045.5,197.3 1046.5,196.7 1047.5,196.6 1048.5,204.1 1049.5,205.2 1050.5,202.2 1051.5,209.8 1052.5,207.7 1053.5,207.2 1054.5,201.6 1055.5,204.5 1056.5,209.2 1057.5,210.7 1058.5,210.0 1059.5,207.9 1060.5,212.5 1061.5,212.1 1062.5,211.9 1063.5,214.0 1064.5,213.9 1065.5,219.4 1066.5,218.4 1067.5,218.8 1068.5,215.1 1069.5,217.8 1070.5,220.1 1071.5,219.1 1072.5,224.6 1073.5,222.4 1074.5,225.2 1075.5,226.5 1076.5,232.1 1077.5,226.9 1078.5,233.3 1079.5,234.1 1080.5,229.4 1081.5,229.8 1082.5,225.8 1083.5,219.6 1084.5,225.3 1085.5,222.5 1086.5,216.4 1087.5,215.2 1088.5,214.6 1089.5,214.0 1090.5,208.9 1091.5,208.4 1092.5,211.2 1093.5,208.3 1094.5,205.2 1095.5,207.2 1096.5,202.1 1097.5,202.4 1098.5,195.0 1099.5,195.5 1100.5,195.0 1101.5,194.9 1102.5,192.8 1103.5,195.8 1104.5,196.3 1105.5,192.6 1106.5,201.3 1107.5,195.2 1108.5,203.9 1109.5,199.7 1110.5,208.0 1111.5,207.2 1112.5,212.0 1113.5,220.7 1114.5,211.3 1115.5,205.9 1116.5,205.0 1117.5,203.1 1118.5,201.1 1119.5,202.3 1120.5,193.3 1121.5,197.4 1122.5,195.0 1123.5,195.6 1124.5,194.6 1125.5,196.3 1126.5,189.0 1127.5,193.3 1128.5,189.8 1129.5,193.0 1130.5,194.1 1131.5,195.0 1132.5,196.4 1133.5,195.3 1134.5,197.7 1135.5,199.2 1136.5,204.9 1137.5,206.8 1138.5,206.9 1139.5,207.8 1140.5,206.8 1141.5,200.7 1142.5,195.1 1143.5,201.6 1144.5,197.2 1145.5,198.8 1146.5,199.6 1147.5,192.6 1148.5,193.5 1149.5,193.1 1150.5,193.7 1151.5,190.9 1152.5,195.1 1153.5,194.5 1154.5,199.9 1155.5,202.0 1156.5,194.2 1157.5,200.3 1158.5,199.0 1159.5,200.9 1160.5,203.3 1161.5,208.1 1162.5,209.0 1163.5,213.1 1164.5,207.4 1165.5,203.2 1166.5,197.0 1167.5,197.0 1168.5,196.9 1169.5,198.2 1170.5,198.5 1171.5,191.0 1172.5,187.1 1173.5,191.4 1174.5,188.8 1175.5,187.2 1176.5,187.7 1177.5,189.9 1178.5,192.8 1179.5,188.4 1180.5,197.9 1181.5,192.0 1182.5,193.9 1183.5,195.9 1184.5,195.4 1185.5,200.1 1186.5,211.2 1187.5,218.7 1188.5,209.4 1189.5,209.4 1190.5,202.5 1191.5,198.3 1192.5,202.5 1193.5,202.3 1194.5,194.9 1195.5,195.8 1196.5,194.5 1197.5,192.4 1198.5,192.4 1199.5,191.4 1200.5,185.1 1201.5,188.8 1202.5,190.8 1203.5,185.4 1204.5,190.2 1205.5,192.0 1206.5,196.7 1207.5,199.5 1208.5,202.1 1209.5,205.2 1210.5,206.4 1211.5,212.7 1212.5,214.0 1213.5,209.7 1214.5,200.3 1215.5,205.5 1216.5,197.0 1217.5,198.9 1218.5,197.2 1219.5,200.3 1220.5,196.1 1221.5,192.9 1222.5,193.4 1223.5,192.6 1224.5,192.1 1225.5,188.6 1226.5,192.6 1227.5,197.0 1228.5,191.4 1229.5,197.2 1230.5,202.3 1231.5,195.0 1232.5,192.4 1233.5,200.2 1234.5,204.8 1235.5,208.0 1236.5,208.2 1237.5,211.3 1238.5,206.4 1239.5,204.4 1240.5,201.7 1241.5,197.5 1242.5,195.4 1243.5,195.9 1244.5,197.5 1245.5,191.7 1246.5,193.1 1247.5,188.0 1248.5,193.3 1249.5,191.0 1250.5,191.8 1251.5,195.5 1252.5,189.0 1253.5,192.3 1254.5,197.2 1255.5,194.6 1256.5,197.7 1257.5,208.4 1258.5,202.8 1259.5,206.6 1260.5,209.5 1261.5,215.9 1262.5,210.5 1263.5,207.4 1264.5,201.3 1265.5,201.5 1266.5,200.9 1267.5,193.7 1268.5,195.5 1269.5,194.4 1270.5,196.8 1271.5,186.0 1272.5,186.2 1273.5,186.5 1274.5,186.5 1275.5,186.4 1276.5,187.7 1277.5,190.9 1278.5,191.8 1279.5,193.0 1280.5,192.4 1281.5,198.7 1282.5,203.1 1283.5,208.7 1284.5,212.6 1285.5,209.4 1286.5,212.4 1287.5,210.2 1288.5,206.7 1289.5,206.3 1290.5,200.8 1291.5,197.1 1292.5,198.5 1293.5,196.7 1294.5,197.2 1295.5,195.7 1296.5,199.2 1297.5,194.3 1298.5,196.3 1299.5,191.6 1300.5,194.7 1301.5,191.2 1302.5,190.3 1303.5,195.2 1304.5,198.8 1305.5,199.0 1306.5,201.2 1307.5,207.6 1308.5,207.3 1309.5,204.0 1310.5,212.7 1311.5,213.8 1312.5,211.8 1313.5,204.9 1314.5,207.3 1315.5,206.5 1316.5,197.4 1317.5,202.0 1318.5,196.1 1319.5,192.2 1320.5,193.2 1321.5,191.9 1322.5,187.2 1323.5,191.6 1324.5,192.6 1325.5,194.3 1326.5,190.4 1327.5,187.9 1328.5,190.8 1329.5,197.1 1330.5,201.1 1331.5,203.0 1332.5,203.2 1333.5,207.1 1334.5,210.9 1335.5,214.6 1336.5,211.4 1337.5,206.2 1338.5,202.0 1339.5,199.9 1340.5,195.8 1341.5,190.7 1342.5,193.3 1343.5,194.5 1344.5,198.2 1345.5,190.8 1346.5,197.0 1347.5,196.4 1348.5,191.5 1349.5,193.2 1350.5,198.0 1351.5,202.4 1352.5,199.7 1353.5,202.7 1354.5,198.7 1355.5,195.0 1356.5,203.0 1357.5,208.2 1358.5,211.6 1359.5,212.5 1360.5,213.9 1361.5,210.5 1362.5,202.7 1363.5,202.0 1364.5,192.0 1365.5,190.6 1366.5,189.5 1367.5,193.9 1368.5,190.7 1369.5,193.1 1370.5,191.6 1371.5,190.9 1372.5,195.4 1373.5,194.8 1374.5,188.5 1375.5,191.9 1376.5,191.2 1377.5,189.6 1378.5,198.7 1379.5,199.8 1380.5,199.6 1381.5,202.8 1382.5,208.6 1383.5,207.6 1384.5,211.5 1385.5,212.2 1386.5,209.3 1387.5,199.0 1388.5,198.3 1389.5,203.8 1390.5,193.0 1391.5,192.2 1392.5,191.5 1393.5,194.3 1394.5,192.4 1395.5,194.6 1396.5,184.8 1397.5,190.1 1398.5,187.4 1399.5,192.5 1400.5,191.6 1401.5,195.7 1402.5,194.6 1403.5,191.0 1404.5,198.5 1405.5,194.5 1406.5,201.9 1407.5,207.3 1408.5,210.5 1409.5,212.9 1410.5,206.6 1411.5,205.0 1412.5,203.5 1413.5,200.3 1414.5,199.0 1415.5,197.4 1416.5,191.2 1417.5,186.0 1418.5,191.0 1419.5,188.2 1420.5,190.9 1421.5,193.9 1422.5,188.6 1423.5,193.7 1424.5,187.2 1425.5,193.1 1426.5,189.2 1427.5,192.7 1428.5,195.4 1429.5,195.3 1430.5,199.4 1431.5,201.1 1432.5,207.3 1433.5,213.7 1434.5,208.9 1435.5,205.2 1436.5,199.3 1437.5,201.1 1438.5,197.5 1439.5,199.5 1440.5,190.6 1441.5,193.7 1442.5,195.5 1443.5,190.2 1444.5,188.3 1445.5,194.8 1446.5,194.2 1447.5,194.9 1448.5,197.9 1449.5,193.3 1450.5,197.3 1451.5,198.5 1452.5,194.7 1453.5,200.6 1454.5,198.3 1455.5,204.1 1456.5,207.5 1457.5,213.6 1458.5,208.6 1459.5,211.3 1460.5,205.7 1461.5,202.2 1462.5,197.6 1463.5,194.0 1464.5,188.7 1465.5,196.2 1466.5,198.3 1467.5,196.5 1468.5,196.5 1469.5,189.1 1470.5,189.3 1471.5,192.8 1472.5,194.8 1473.5,194.3 1474.5,191.2 1475.5,203.9 1476.5,196.9 1477.5,202.9 1478.5,199.4 1479.5,208.9 1480.5,210.4 1481.5,216.5 1482.5,216.9 1483.5,212.9 1484.5,206.7 1485.5,206.5 1486.5,204.4 1487.5,204.7 1488.5,198.8 1489.5,197.7 1490.5,192.7 1491.5,191.5 1492.5,194.8 1493.5,193.0 1494.5,191.9 1495.5,189.6 1496.5,188.8 1497.5,193.9 1498.5,194.6 1499.5,193.2 1500.5,197.1 1501.5,197.7 1502.5,195.0 1503.5,201.1 1504.5,199.5 1505.5,203.7 1506.5,207.0 1507.5,215.1 1508.5,214.0 1509.5,209.8 1510.5,204.7 1511.5,203.4 1512.5,196.9 1513.5,197.1 1514.5,199.3 1515.5,195.0 1516.5,195.1 1517.5,193.4 1518.5,192.1 1519.5,196.9 1520.5,193.3 1521.5,195.2 1522.5,193.8 1523.5,193.1 1524.5,193.4 1525.5,196.6 1526.5,192.8 1527.5,196.4 1528.5,196.5 1529.5,202.8 1530.5,201.7 1531.5,206.1 1532.5,214.4 1533.5,212.7 1534.5,207.2 1535.5,209.3 1536.5,201.2 1537.5,198.8 1538.5,193.9 1539.5,191.9 1540.5,193.5 1541.5,191.1 1542.5,189.1 1543.5,190.6 1544.5,191.1 1545.5,195.9 1546.5,192.0 1547.5,191.4 1548.5,192.1 1549.5,194.7 1550.5,200.8 1551.5,195.6 1552.5,199.5 1553.5,208.8 1554.5,206.8 1555.5,213.8 1556.5,216.1 1557.5,214.0 1558.5,204.4 1559.5,204.2 1560.5,201.2 1561.5,195.8 1562.5,194.2 1563.5,196.4 1564.5,194.9 1565.5,196.0 1566.5,194.1 1567.5,192.5 1568.5,193.3 1569.5,195.6 1570.5,192.9 1571.5,198.6 1572.5,196.3 1573.5,194.0 1574.5,195.4 1575.5,196.9 1576.5,200.2 1577.5,203.7 1578.5,203.1 1579.5,207.3 1580.5,212.1 1581.5,208.8 1582.5,208.8 1583.5,204.5 1584.5,208.3 1585.5,204.4 1586.5,201.4 1587.5,198.3 1588.5,202.5 1589.5,195.5 1590.5,191.1 1591.5,193.1 1592.5,198.5 1593.5,196.3 1594.5,193.3 1595.5,202.2 1596.5,194.9 1597.5,192.9 1598.5,191.6 1599.5,191.3 1600.5,194.4 1601.5,199.7 1602.5,202.4 1603.5,203.7 1604.5,210.1 1605.5,212.7 1606.5,211.9 1607.5,204.4 1608.5,207.5 1609.5,203.7 1610.5,201.1 1611.5,195.4 1612.5,195.9 1613.5,190.4 1614.5,195.9 1615.5,192.8 1616.5,192.1 1617.5,188.4 1618.5,184.9 1619.5,190.7 1620.5,189.2 1621.5,186.5 1622.5,190.9 1623.5,196.7 1624.5,193.9 1625.5,197.7 1626.5,199.7 1627.5,203.8 1628.5,202.6 1629.5,209.2 1630.5,210.8 1631.5,214.7 1632.5,211.5 1633.5,203.9 1634.5,202.4 1635.5,192.9 1636.5,192.5 1637.5,194.1 1638.5,189.9 1639.5,192.5 1640.5,188.3 1641.5,189.9 1642.5,188.7 1643.5,184.9 1644.5,180.7 1645.5,183.5 1646.5,191.1 1647.5,192.4 1648.5,191.5 1649.5,198.6 1650.5,201.5 1651.5,200.1 1652.5,200.1 1653.5,206.9 1654.5,211.3 1655.5,215.1 1656.5,204.4 1657.5,205.5 1658.5,200.6 1659.5,197.6 1660.5,194.9 1661.5,196.4 1662.5,192.3 1663.5,193.0 1664.5,192.7 1665.5,192.9 1666.5,185.0 1667.5,188.4 1668.5,191.4 1669.5,190.2 1670.5,191.9 1671.5,189.0 1672.5,196.9 1673.5,198.0 1674.5,196.7 1675.5,192.1 1676.5,198.6 1677.5,205.0 1678.5,205.1 1679.5,207.0 1680.5,213.3 1681.5,210.1 1682.5,204.2 1683.5,203.8 1684.5,200.9 1685.5,203.3 1686.5,193.3 1687.5,190.7 1688.5,193.0 1689.5,189.8 1690.5,195.8 1691.5,188.6 1692.5,189.4 1693.5,188.0 1694.5,189.0 1695.5,191.5 1696.5,195.2 1697.5,191.4 1698.5,195.2 1699.5,195.8 1700.5,200.8 1701.5,201.3 1702.5,209.5 1703.5,204.0 1704.5,211.2 1705.5,205.9 1706.5,201.1 1707.5,204.2 1708.5,206.2 1709.5,201.4 1710.5,202.7 1711.5,199.8 1712.5,195.9 1713.5,199.1 1714.5,192.2 1715.5,194.1 1716.5,192.5 1717.5,193.7 1718.5,191.8 1719.5,190.3 1720.5,192.8 1721.5,192.3 1722.5,197.6 1723.5,201.7 1724.5,203.8 1725.5,209.8 1726.5,220.4 1727.5,218.1 1728.5,218.1 1729.5,221.1 1730.5,235.5 1731.5,233.0 1732.5,222.4 1733.5,214.3 1734.5,221.8 1735.5,228.3 1736.5,231.3 1737.5,219.3 1738.5,202.4 1739.5,210.5 1740.5,221.5 1741.5,220.6 1742.5,211.5 1743.5,208.3 1744.5,206.6 1745.5,212.2 1746.5,222.3 1747.5,217.9 1748.5,204.2 1749.5,209.4 1750.5,217.4 1751.5,225.0 1752.5,215.8 1753.5,214.2 1754.5,205.9 1755.5,211.1 1756.5,216.1 1757.5,214.2 1758.5,199.6 1759.5,200.7 1760.5,200.6 1761.5,211.5 1762.5,214.2 1763.5,201.7 1764.5,196.9 1765.5,202.7 1766.5,207.4 1767.5,211.2 1768.5,201.8 1769.5,190.3 1770.5,191.1 1771.5,196.5 1772.5,207.3 1773.5,202.3 1774.5,191.5 1775.5,190.9 1776.5,198.7 1777.5,200.4 1778.5,201.1 1779.5,194.9 1780.5,182.9 1781.5,190.1 1782.5,195.3 1783.5,195.2 1784.5,184.5 1785.5,183.1 1786.5,183.2 1787.5,195.4 1788.5,197.2 1789.5,190.3 1790.5,186.4 1791.5,185.6 1792.5,195.9 1793.5,197.2 1794.5,172.3 1795.5,165.7 1796.5,169.8 1797.5,174.7 1798.5,174.5 1799.5,169.8 1800.5,170.2 1801.5,171.0 1802.5,168.7 1803.5,170.6 1804.5,166.8 1805.5,171.7 1806.5,168.6 1807.5,164.7 1808.5,160.9 1809.5,172.0 1810.5,171.1 1811.5,175.2 1812.5,173.7 1813.5,179.4 1814.5,178.6 1815.5,177.2 1816.5,178.0 1817.5,178.3 1818.5,177.2 1819.5,182.1 1820.5,181.0 1821.5,178.9 1822.5,176.7 1823.5,178.7 1824.5,182.6 1825.5,178.7 1826.5,175.4 1827.5,175.8" fill="none" stroke="#f0f0f0" stroke-width="1.75" stroke-linejoin="round"/><line x1="1404.2" x2="1404.2" y1="50.0" y2="277.8" stroke="#e6e640" stroke-width="1.5"/><line x1="980" x2="980" y1="49.0" y2="278.8" stroke="#d02828" stroke-width="1.5"/><rect x="1464.7" y="472.0" width="88.7" height="139.4" fill="#404040"/><line x1="1464.7" x2="1850.6" y1="499.5" y2="499.5" stroke="#949494" stroke-width="1"/><line x1="1464.7" x2="1850.6" y1="527.5" y2="527.5" stroke="#949494" stroke-width="1"/><line x1="1464.7" x2="1850.6" y1="555.5" y2="555.5" stroke="#949494" stroke-width="1"/><line x1="1464.7" x2="1850.6" y1="583.5" y2="583.5" stroke="#949494" stroke-width="1"/><line x1="1482.5" x2="1482.5" y1="472.0" y2="611.4" stroke="#949494" stroke-width="1"/><line x1="1508.5" x2="1508.5" y1="472.0" y2="611.4" stroke="#949494" stroke-width="1"/><line x1="1534.5" x2="1534.5" y1="472.0" y2="611.4" stroke="#949494" stroke-width="1"/><line x1="1560.5" x2="1560.5" y1="472.0" y2="611.4" stroke="#949494" stroke-width="1"/><line x1="1586.5" x2="1586.5" y1="472.0" y2="611.4" stroke="#949494" stroke-width="1"/><line x1="1611.5" x2="1611.5" y1="472.0" y2="611.4" stroke="#949494" stroke-width="1"/><line x1="1637.5" x2="1637.5" y1="472.0" y2="611.4" stroke="#949494" stroke-width="1"/><line x1="1663.5" x2="1663.5" y1="472.0" y2="611.4" stroke="#949494" stroke-width="1"/><line x1="1689.5" x2="1689.5" y1="472.0" y2="611.4" stroke="#949494" stroke-width="1"/><line x1="1715.5" x2="1715.5" y1="472.0" y2="611.4" stroke="#949494" stroke-width="1"/><line x1="1740.5" x2="1740.5" y1="472.0" y2="611.4" stroke="#949494" stroke-width="1"/><line x1="1766.5" x2="1766.5" y1="472.0" y2="611.4" stroke="#949494" stroke-width="1"/><line x1="1792.5" x2="1792.5" y1="472.0" y2="611.4" stroke="#949494" stroke-width="1"/><line x1="1818.5" x2="1818.5" y1="472.0" y2="611.4" stroke="#949494" stroke-width="1"/><line x1="1844.5" x2="1844.5" y1="472.0" y2="611.4" stroke="#949494" stroke-width="1"/><rect x="1464.7" y="472.0" width="385.9" height="139.4" fill="none" stroke="#9a9a9a" stroke-width="1.8"/><polyline points="1465.7,596.7 1466.5,606.4 1467.4,610.8 1468.2,592.9 1469.1,610.8 1469.9,604.5 1470.8,603.4 1471.6,610.8 1472.5,604.5 1473.3,599.7 1474.2,602.5 1475.0,602.6 1475.9,599.9 1476.7,606.7 1477.6,607.2 1478.4,610.8 1479.3,603.3 1480.1,606.4 1481.0,610.8 1481.8,595.4 1482.7,591.7 1483.5,610.8 1484.4,592.2 1485.2,610.8 1486.1,605.7 1486.9,601.1 1487.8,609.5 1488.6,584.1 1489.5,610.5 1490.3,596.2 1491.2,597.5 1492.0,606.1 1492.9,607.5 1493.7,584.1 1494.6,600.0 1495.4,603.8 1496.3,601.8 1497.1,598.0 1498.0,592.2 1498.8,610.8 1499.7,602.5 1500.5,600.8 1501.4,610.8 1502.2,601.7 1503.1,610.0 1503.9,593.5 1504.8,608.8 1505.6,609.4 1506.5,601.1 1507.3,607.6 1508.2,606.3 1509.0,592.9 1509.9,598.3 1510.7,591.2 1511.6,596.1 1512.4,609.4 1513.3,606.3 1514.1,605.9 1515.0,595.0 1515.8,609.4 1516.7,610.8 1517.5,601.8 1518.4,604.3 1519.2,600.3 1520.1,600.8 1520.9,598.0 1521.8,609.3 1522.6,602.3 1523.5,605.9 1524.3,610.8 1525.2,599.7 1526.0,599.4 1526.9,610.8 1527.7,608.4 1528.6,598.5 1529.4,610.8 1530.3,610.8 1531.1,606.2 1532.0,607.1 1532.8,597.1 1533.7,610.8 1534.5,607.8 1535.4,610.8 1536.2,601.3 1537.1,596.6 1537.9,593.8 1538.8,610.8 1539.6,604.9 1540.5,586.3 1541.3,602.7 1542.2,601.0 1543.0,601.8 1543.9,602.4 1544.7,592.8 1545.6,584.1 1546.4,610.0 1547.3,601.5 1548.1,607.2 1549.0,590.2 1549.8,607.8 1550.7,598.1 1551.5,600.4 1552.6,605.8 1553.4,550.1 1554.2,589.1 1555.5,583.5 1557.0,591.9 1558.6,580.7 1559.8,569.6 1560.6,533.3 1561.4,572.4 1562.2,576.5 1563.4,586.3 1564.6,591.9 1566.0,600.2 1567.7,610.8 1568.5,601.8 1569.4,600.5 1570.2,604.1 1571.1,594.5 1571.9,608.1 1572.8,599.7 1573.6,603.5 1574.5,607.5 1575.3,606.6 1576.2,603.1 1577.0,584.1 1577.9,601.9 1578.7,600.9 1579.6,599.7 1580.4,603.7 1581.3,599.8 1582.1,606.5 1583.0,599.9 1583.8,602.6 1584.7,608.4 1585.5,600.0 1586.4,592.6 1587.2,594.5 1588.1,605.9 1588.9,610.8 1589.8,601.1 1590.6,600.9 1591.5,606.1 1592.3,602.5 1593.2,592.1 1594.0,584.1 1594.9,595.8 1595.7,610.4 1596.6,596.4 1597.4,609.8 1598.3,587.9 1599.1,605.3 1600.0,600.6 1600.8,609.7 1601.7,608.4 1602.5,599.1 1603.4,597.7 1604.2,610.8 1605.1,606.0 1605.9,602.4 1606.8,606.2 1607.6,597.9 1608.5,587.2 1609.3,606.9 1610.2,587.0 1611.0,598.4 1611.9,607.7 1612.7,599.5 1613.6,596.4 1614.4,610.8 1615.3,605.6 1616.1,595.5 1617.0,595.0 1617.8,602.8 1618.7,610.3 1619.5,606.5 1620.4,604.2 1621.2,588.9 1622.1,594.8 1622.9,603.5 1623.8,609.2 1624.6,601.4 1625.5,591.0 1626.3,594.8 1627.2,604.4 1628.0,609.6 1628.9,595.8 1629.7,605.3 1630.6,590.8 1631.4,608.7 1632.3,607.7 1633.1,598.2 1634.0,606.1 1634.8,610.8 1635.7,605.3 1636.5,593.9 1637.4,599.6 1638.2,606.8 1639.1,610.8 1639.9,606.0 1640.8,607.5 1641.6,607.3 1642.5,608.0 1643.3,600.5 1644.2,584.1 1645.0,605.7 1645.9,600.7 1646.7,602.7 1647.6,607.4 1648.4,598.5 1649.3,596.3 1650.1,610.8 1651.0,610.8 1651.8,604.5 1652.7,607.5 1653.5,610.4 1654.4,599.8 1655.2,610.8 1656.1,586.4 1656.9,601.8 1657.8,598.7 1658.6,596.3 1659.5,592.7 1660.3,603.9 1661.2,587.5 1662.0,610.1 1662.9,610.8 1663.7,608.3 1664.6,603.8 1665.4,610.8 1666.3,610.8 1667.1,596.1 1668.0,604.7 1668.8,597.6 1669.7,602.1 1670.5,604.8 1671.4,597.0 1672.2,598.4 1673.1,601.0 1673.9,607.1 1674.8,590.2 1675.6,594.3 1676.5,610.8 1677.3,609.5 1678.2,589.7 1679.0,604.0 1679.9,596.5 1680.7,609.0 1681.6,604.1 1682.4,603.4 1683.3,598.0 1684.1,599.8 1685.0,604.2 1685.8,610.8 1686.7,600.0 1687.5,606.6 1688.4,603.3 1689.2,600.9 1690.1,593.8 1690.9,599.9 1691.8,584.1 1692.6,596.1 1693.5,597.9 1694.3,610.8 1695.2,603.6 1696.0,610.8 1696.9,602.5 1697.7,609.3 1698.6,602.5 1699.4,610.8 1700.3,602.1 1701.1,584.1 1702.0,601.5 1702.8,603.1 1703.7,601.8 1704.5,605.8 1705.4,589.9 1706.2,605.1 1707.1,605.5 1707.9,602.3 1708.8,606.6 1709.6,603.4 1710.5,593.0 1711.3,596.1 1712.2,609.6 1713.0,609.5 1713.9,596.8 1714.7,602.2 1715.6,601.8 1716.4,609.1 1717.3,610.8 1718.1,585.4 1719.0,597.7 1719.8,601.9 1720.7,595.8 1721.5,609.3 1722.4,602.0 1723.2,605.3 1724.1,606.0 1724.9,604.6 1725.8,599.2 1726.6,610.2 1727.5,610.8 1728.3,607.4 1729.2,603.4 1730.0,607.3 1730.9,602.0 1731.7,590.1 1732.6,608.2 1733.4,610.8 1734.3,594.6 1735.1,597.7 1736.0,610.8 1736.8,603.7 1737.7,597.4 1738.5,602.9 1739.4,584.1 1740.2,594.4 1741.1,585.7 1741.9,604.0 1742.8,602.8 1743.6,598.9 1744.5,607.7 1745.3,608.7 1746.2,607.6 1747.0,592.6 1747.9,608.4 1748.7,599.9 1749.6,603.0 1750.4,604.3 1751.3,610.7 1752.1,606.8 1753.0,610.8 1753.8,610.8 1754.7,610.2 1755.5,607.6 1756.4,604.2 1757.2,605.1 1758.1,601.2 1758.9,592.3 1759.8,604.6 1760.6,591.7 1761.5,584.1 1762.3,601.4 1763.2,601.4 1764.0,589.0 1764.9,584.1 1765.7,584.1 1766.6,593.4 1767.4,590.7 1768.3,602.7 1769.1,610.8 1770.0,606.5 1770.8,602.6 1771.7,604.8 1772.5,600.7 1773.4,608.5 1774.2,599.8 1775.1,597.1 1775.9,606.4 1776.8,610.8 1777.6,593.2 1778.5,595.7 1779.3,606.0 1780.2,591.9 1781.0,610.8 1781.9,604.3 1782.7,602.1 1783.6,610.8 1784.4,603.8 1785.3,599.3 1786.1,602.7 1787.0,599.1 1787.8,610.8 1788.7,601.8 1789.5,604.4 1790.4,606.9 1791.2,599.3 1792.1,603.1 1792.9,598.8 1793.8,584.4 1794.6,598.1 1795.5,610.8 1796.3,607.7 1797.2,605.3 1798.0,610.8 1798.9,593.3 1799.7,603.4 1800.6,602.7 1801.4,602.8 1802.3,596.0 1803.1,607.1 1804.0,607.5 1804.8,599.6 1805.7,606.8 1806.5,609.9 1807.4,608.7 1808.2,588.5 1809.1,601.8 1809.9,595.1 1810.8,604.0 1811.6,606.0 1812.5,605.9 1813.3,609.2 1814.2,610.8 1815.0,590.6 1815.9,610.8 1816.7,592.0 1817.6,608.5 1818.4,607.6 1819.3,610.8 1820.1,585.0 1821.0,607.6 1821.8,607.2 1822.7,610.4 1823.5,608.5 1824.4,601.6 1825.2,599.8 1826.1,598.1 1826.9,598.7 1827.8,604.7 1828.6,602.6 1829.5,606.6 1830.3,596.6 1831.2,599.9 1832.0,589.2 1832.9,610.8 1833.7,596.3 1834.6,605.6 1835.4,610.4 1836.3,590.0 1837.1,584.1 1838.0,592.8 1838.8,610.8 1839.7,610.1 1840.5,610.8 1841.4,609.6 1842.2,602.8 1843.1,584.1 1843.9,606.6 1844.8,602.7 1845.6,595.6 1846.5,603.8 1847.3,610.8 1848.2,606.8 1849.0,596.4" fill="none" stroke="#f6f6f6" stroke-width="1.35" stroke-linejoin="round"/><line x1="1553.5" x2="1553.5" y1="472.0" y2="611.4" stroke="#f0f020" stroke-width="1.2" stroke-dasharray="1.4,1.4"/><line x1="1553.6" x2="1553.6" y1="548" y2="611.4" stroke="#f4f080" stroke-width="1.6"/><line x1="1560.7" x2="1560.7" y1="534" y2="578" stroke="#e8e8e8" stroke-width="2"/><circle cx="1553.8" cy="548.2" r="5.5" fill="#e81010"/><circle cx="1560.7" cy="532.1" r="5.7" fill="#ffff10"/><line x1="1216.9" x2="1845.1" y1="783.5" y2="783.5" stroke="#949494" stroke-width="1"/><line x1="1216.9" x2="1845.1" y1="817.5" y2="817.5" stroke="#949494" stroke-width="1"/><line x1="1216.9" x2="1845.1" y1="851.5" y2="851.5" stroke="#949494" stroke-width="1"/><line x1="1216.9" x2="1845.1" y1="886.5" y2="886.5" stroke="#949494" stroke-width="1"/><line x1="1255.5" x2="1255.5" y1="749.8" y2="920.1" stroke="#949494" stroke-width="1"/><line x1="1316.5" x2="1316.5" y1="749.8" y2="920.1" stroke="#949494" stroke-width="1"/><line x1="1378.5" x2="1378.5" y1="749.8" y2="920.1" stroke="#949494" stroke-width="1"/><line x1="1439.5" x2="1439.5" y1="749.8" y2="920.1" stroke="#949494" stroke-width="1"/><line x1="1501.5" x2="1501.5" y1="749.8" y2="920.1" stroke="#949494" stroke-width="1"/><line x1="1562.5" x2="1562.5" y1="749.8" y2="920.1" stroke="#949494" stroke-width="1"/><line x1="1623.5" x2="1623.5" y1="749.8" y2="920.1" stroke="#949494" stroke-width="1"/><line x1="1685.5" x2="1685.5" y1="749.8" y2="920.1" stroke="#949494" stroke-width="1"/><line x1="1746.5" x2="1746.5" y1="749.8" y2="920.1" stroke="#949494" stroke-width="1"/><line x1="1808.5" x2="1808.5" y1="749.8" y2="920.1" stroke="#949494" stroke-width="1"/><rect x="1216.9" y="911.6" width="628.2" height="8.5" fill="#5a5a5a" fill-opacity="0.85"/><rect x="1216.9" y="749.8" width="628.2" height="170.3" fill="none" stroke="#9a9a9a" stroke-width="1.8"/><line x1="1216.9" x2="1295" y1="918" y2="918" stroke="#b4b4b4" stroke-width="1.6"/><line x1="1768" x2="1845.1" y1="918" y2="918" stroke="#b4b4b4" stroke-width="1.6"/><line x1="1295.5" x2="1295.5" y1="750.8" y2="920.1" stroke="#d6d620" stroke-width="1.9" stroke-dasharray="1.8,1.9"/><line x1="1413.3" x2="1413.3" y1="750.8" y2="920.1" stroke="#d6d620" stroke-width="1.9" stroke-dasharray="1.8,1.9"/><line x1="1531.1" x2="1531.1" y1="750.8" y2="920.1" stroke="#d6d620" stroke-width="1.9" stroke-dasharray="1.8,1.9"/><line x1="1649.2" x2="1649.2" y1="750.8" y2="920.1" stroke="#d6d620" stroke-width="1.9" stroke-dasharray="1.8,1.9"/><line x1="1767.4" x2="1767.4" y1="750.8" y2="920.1" stroke="#d6d620" stroke-width="1.9" stroke-dasharray="1.8,1.9"/><defs><linearGradient id="gg" x1="0" y1="0" x2="0" y2="1"><stop offset="0" stop-color="#86cc86"/><stop offset="0.7" stop-color="#a8dca8"/><stop offset="1" stop-color="#e0f4e0"/></linearGradient></defs><polygon points="1327.3,920.1 1328.0,878.4 1329.8,878.4 1330.4,920.1" fill="url(#gg)"/><polygon points="1329.8,920.1 1330.5,822.2 1332.0,822.2 1332.8,920.1" fill="#f4f4f4"/><polygon points="1357.2,920.1 1357.9,875.0 1359.7,875.0 1360.3,920.1" fill="url(#gg)"/><polygon points="1359.4,920.1 1360.0,863.9 1361.5,863.9 1362.4,920.1" fill="#f4f4f4"/><polygon points="1386.9,920.1 1387.6,879.2 1389.4,879.2 1390.0,920.1" fill="url(#gg)"/><polygon points="1388.6,920.1 1389.2,808.6 1390.8,808.6 1391.6,920.1" fill="#f4f4f4"/><polygon points="1401.5,920.1 1402.2,878.0 1404.0,878.0 1404.6,920.1" fill="url(#gg)"/><polygon points="1403.5,920.1 1404.2,796.6 1405.7,796.6 1406.5,920.1" fill="#f4f4f4"/><polygon points="1445.9,920.1 1446.6,872.4 1448.4,872.4 1449.0,920.1" fill="url(#gg)"/><polygon points="1447.6,920.1 1448.2,818.8 1449.8,818.8 1450.6,920.1" fill="#f4f4f4"/><polygon points="1475.4,920.1 1476.1,867.3 1477.9,867.3 1478.5,920.1" fill="url(#gg)"/><polygon points="1476.9,920.1 1477.5,800.9 1479.0,800.9 1479.9,920.1" fill="#f4f4f4"/><polygon points="1504.0,920.1 1504.7,836.7 1506.5,836.7 1507.1,920.1" fill="url(#gg)"/><polygon points="1506.2,920.1 1506.8,794.1 1508.3,794.1 1509.2,920.1" fill="#f4f4f4"/><polygon points="1518.8,920.1 1519.5,900.2 1521.3,900.2 1521.9,920.1" fill="url(#gg)"/><polygon points="1521.0,920.1 1521.7,820.5 1523.2,820.5 1524.0,920.1" fill="#f4f4f4"/><polygon points="1563.5,920.1 1564.2,861.7 1566.0,861.7 1566.6,920.1" fill="url(#gg)"/><polygon points="1565.3,920.1 1566.0,757.8 1567.5,757.8 1568.3,920.1" fill="#f4f4f4"/><polygon points="1593.1,920.1 1593.8,828.8 1595.6,828.8 1596.2,920.1" fill="url(#gg)"/><polygon points="1594.9,920.1 1595.5,812.3 1597.0,812.3 1597.9,920.1" fill="#f4f4f4"/><polygon points="1622.6,920.1 1623.3,883.0 1625.1,883.0 1625.7,920.1" fill="url(#gg)"/><polygon points="1624.5,920.1 1625.2,789.8 1626.7,789.8 1627.5,920.1" fill="#f4f4f4"/><polygon points="1636.6,920.1 1637.3,851.3 1639.1,851.3 1639.7,920.1" fill="url(#gg)"/><polygon points="1638.8,920.1 1639.5,781.1 1641.0,781.1 1641.8,920.1" fill="#f4f4f4"/><polygon points="1680.9,920.1 1681.6,874.6 1683.4,874.6 1684.0,920.1" fill="url(#gg)"/><polygon points="1683.2,920.1 1683.8,794.8 1685.3,794.8 1686.2,920.1" fill="#f4f4f4"/><polygon points="1710.5,920.1 1711.2,880.9 1713.0,880.9 1713.6,920.1" fill="url(#gg)"/><polygon points="1712.7,920.1 1713.3,793.9 1714.8,793.9 1715.7,920.1" fill="#f4f4f4"/><polygon points="1740.0,920.1 1740.7,892.0 1742.5,892.0 1743.1,920.1" fill="url(#gg)"/><polygon points="1742.3,920.1 1743.0,789.3 1744.5,789.3 1745.3,920.1" fill="#f4f4f4"/><polygon points="1754.8,920.1 1755.5,871.9 1757.3,871.9 1757.9,920.1" fill="url(#gg)"/><polygon points="1756.6,920.1 1757.2,749.8 1758.8,749.8 1759.6,920.1" fill="#f4f4f4"/><rect x="1583.5" y="913.7" width="1.8" height="6.4" fill="#a8a8a8"/><rect x="1601.6" y="908.4" width="1.8" height="11.7" fill="#a8a8a8"/><rect x="1618.0" y="909.6" width="1.8" height="10.5" fill="#a8a8a8"/><rect x="1672.1" y="912.9" width="1.8" height="7.2" fill="#a8a8a8"/></svg>
</div></body></html>
